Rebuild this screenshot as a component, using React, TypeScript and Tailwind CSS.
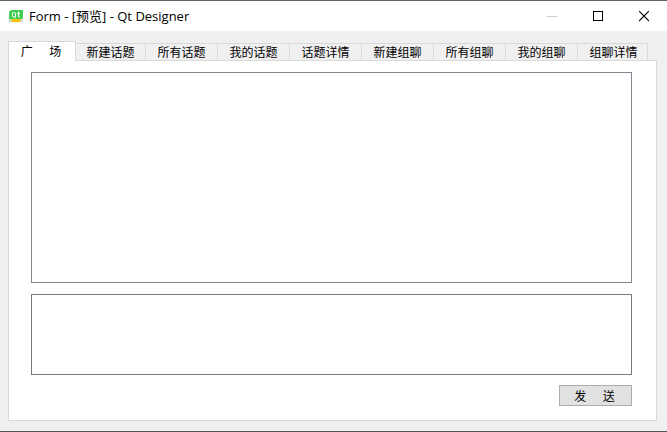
import { useState } from "react";

const tabs = [
  { label: "广     场", width: "w-[68px] pr-0.5" },
  { label: "新建话题", width: "w-[70px]" },
  { label: "所有话题", width: "w-[72px]" },
  { label: "我的话题", width: "w-[72px]" },
  { label: "话题详情", width: "w-[72px]" },
  { label: "新建组聊", width: "w-[72px]" },
  { label: "所有组聊", width: "w-[72px]" },
  { label: "我的组聊", width: "w-[72px]" },
  { label: "组聊详情", width: "w-[70px] pl-0.5" },
];

function QtIcon() {
  return (
    <svg width="14" height="12" viewBox="0 0 14 12" aria-hidden="true">
      <path d="M2 0H14V8L12.5 9.5H0V2Z" fill="#41cd52" />
      <path d="M0 9.5H3V12H0Z" fill="#b9dfc0" />
      <path d="M11 9.5H14V12H11Z" fill="#dcdcdc" />
      <path d="M3 9H11.5V12H2Z" fill="#f5c211" />
      <path
        d="M4.2 2.5H5.8L6.5 3.2V6.3L5.8 7H4.2L3.5 6.3V3.2ZM5.5 6.5L6.5 8M9.5 1.5V6.5L10 7H11M8 3.5H11"
        fill="none"
        stroke="#fff"
        strokeWidth="1"
      />
    </svg>
  );
}

function TitleBar() {
  return (
    <header className="flex h-[30px] shrink-0 items-center bg-white pl-[9px]">
      <QtIcon />
      <h1 className="ml-1.5 flex-1 whitespace-nowrap text-[13px] leading-4 font-['Open_Sans','Noto_Sans_CJK_SC',sans-serif]">
        Form - [预览] - Qt Designer
      </h1>
      <button type="button" aria-label="最小化" disabled className="flex h-full w-[46px] items-center justify-center">
        <svg width="10" height="11" viewBox="0 0 10 11" shapeRendering="crispEdges">
          <path d="M0 5.5H10" stroke="#cccccc" />
        </svg>
      </button>
      <button type="button" aria-label="最大化" className="flex h-full w-[46px] items-center justify-center">
        <svg width="10" height="11" viewBox="0 0 10 11" shapeRendering="crispEdges">
          <rect x="0.5" y="0.5" width="9" height="9" fill="none" stroke="#000" />
        </svg>
      </button>
      <button type="button" aria-label="关闭" className="flex h-full w-[46px] items-center justify-center">
        <svg width="10" height="11" viewBox="0 0 10 11">
          <path d="M0 0L10 10M10 0L0 10" stroke="#000" strokeWidth="1.1" />
        </svg>
      </button>
    </header>
  );
}

export default function App() {
  const [active, setActive] = useState(0);

  return (
    <div className="flex min-h-screen flex-col border-t border-b border-t-[#646464] border-b-[#555555] bg-[#f0f0f0] text-[12px] leading-4 text-black font-['Liberation_Sans','Noto_Sans_CJK_SC',sans-serif]">
      <TitleBar />
      <main className="flex flex-1 flex-col pt-2.5 pr-2.5 pb-2.5 pl-2">
        <div role="tablist" className="z-10 -mb-px flex items-end">
          {tabs.map((tab, i) => (
            <button
              key={tab.label}
              type="button"
              role="tab"
              aria-selected={i === active}
              onClick={() => setActive(i)}
              className={`flex shrink-0 justify-center whitespace-pre border-t border-r border-[#d9d9d9] ${tab.width} ${
                i === active ? "h-5 border-l bg-white pt-0.5" : "h-[18px] border-b pt-px"
              }`}
            >
              {tab.label}
            </button>
          ))}
        </div>
        <section
          role="tabpanel"
          className="flex flex-1 flex-col items-end gap-[11px] border border-[#d9d9d9] bg-white pt-[11px] pr-6 pb-3.5 pl-[22px]"
        >
          <textarea
            aria-label="消息记录"
            readOnly
            className="w-full flex-1 resize-none border border-[#828790] bg-white p-1 outline-none"
          />
          <textarea
            aria-label="输入消息"
            className="h-[81px] w-full resize-none border border-[#7a7a7a] bg-white p-1 outline-none"
          />
          <button
            type="button"
            className="-mt-px flex h-[21px] w-[73px] items-center justify-center whitespace-pre border border-[#adadad] bg-[#e1e1e1] pt-0.5 pr-0.5"
          >
            {"发     送"}
          </button>
        </section>
      </main>
    </div>
  );
}
